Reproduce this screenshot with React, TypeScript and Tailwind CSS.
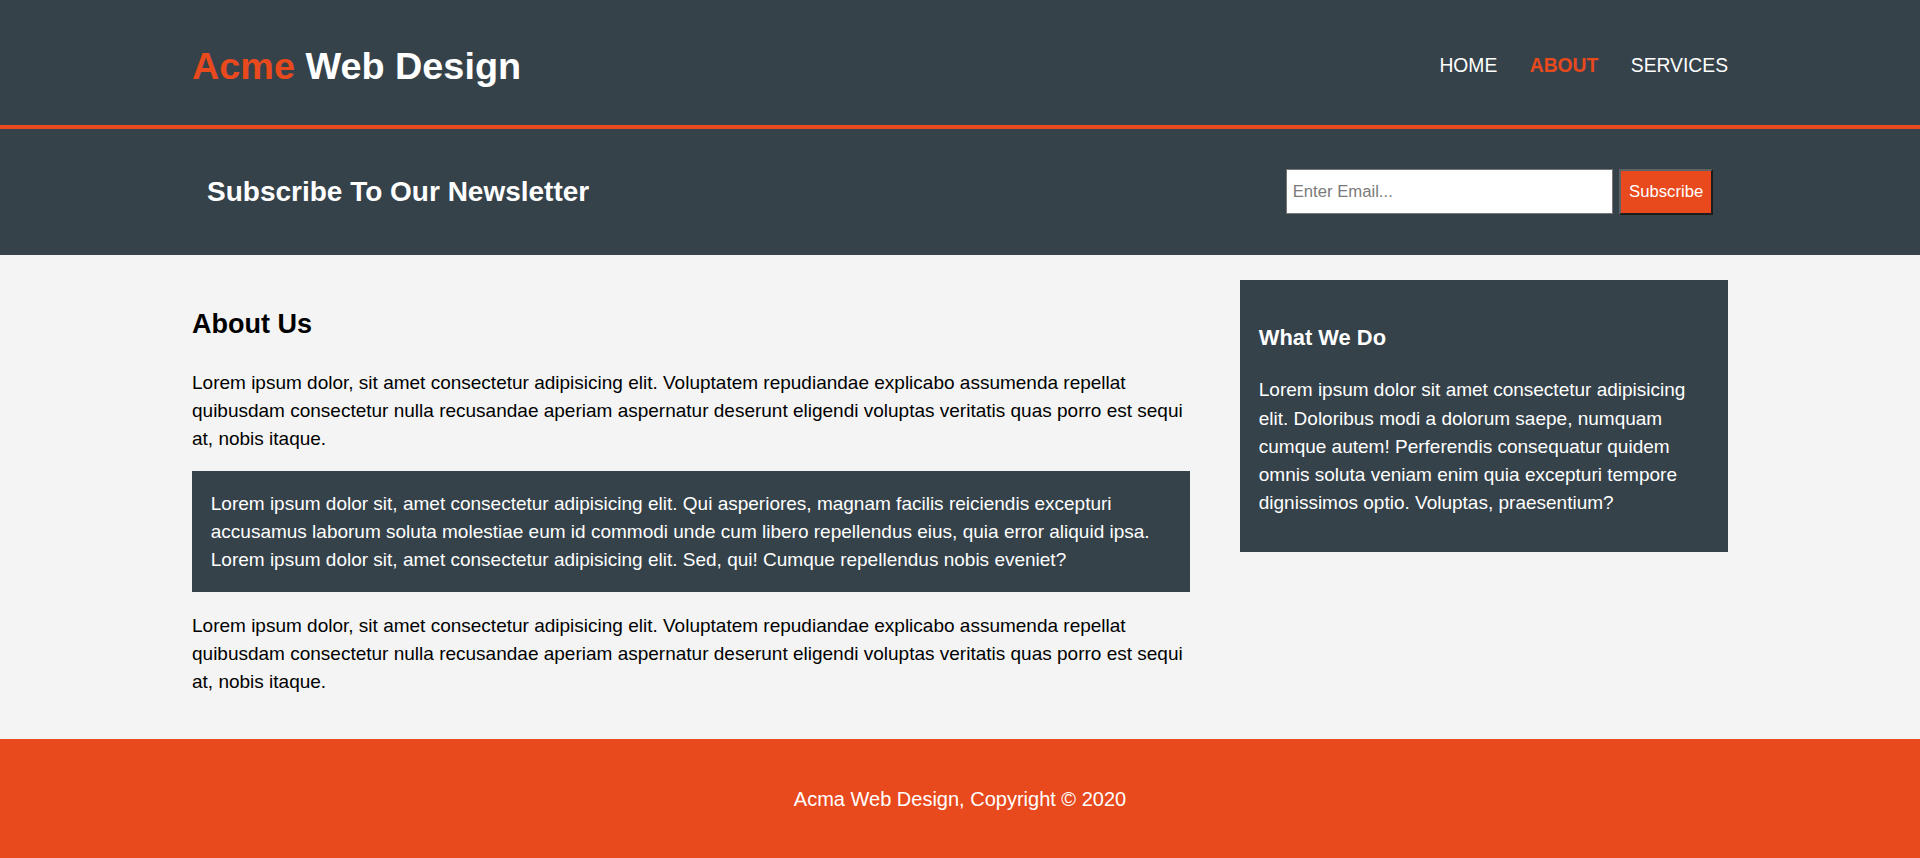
import React from "react";

const FONT = { fontFamily: '"Liberation Sans", Arial, Helvetica, sans-serif' };

function MainPara({ className }: { className: string }) {
  return (
    <p className={className}>
      Lorem ipsum dolor, sit amet consectetur adipisicing elit. Voluptatem repudiandae explicabo assumenda repellat
      <br />
      quibusdam consectetur nulla recusandae aperiam aspernatur deserunt eligendi voluptas veritatis quas porro est sequi
      <br />
      at, nobis itaque.
    </p>
  );
}

export default function App() {
  return (
    <div
      className="min-h-screen bg-[#f4f4f4] text-black font-['Liberation_Sans',Arial,sans-serif]"
      style={FONT}
    >
      {/* Header */}
      <header className="bg-[#35424a] h-[129px] border-b-[4px] border-[#e8491d] text-white">
        <div className="w-[1536px] mx-auto flex justify-between">
          <h1 className="pt-[37.5px] text-[37.8px] leading-[56.25px] font-bold m-0">
            <span className="text-[#e8491d]">Acme</span> Web Design
          </h1>
          <nav className="pt-[54px]">
            <ul className="flex gap-[32.5px] text-[19.3px] leading-[24px] uppercase">
              <li>
                <a href="#" className="text-white">Home</a>
              </li>
              <li>
                <a href="#" className="text-[#e8491d] font-bold">About</a>
              </li>
              <li>
                <a href="#" className="text-white">Services</a>
              </li>
            </ul>
          </nav>
        </div>
      </header>

      {/* Newsletter */}
      <section className="bg-[#35424a] h-[126px] text-white">
        <div className="w-[1506px] mx-auto flex justify-between items-start">
          <h1 className="mt-[41.75px] text-[28px] leading-[42px] font-bold">
            Subscribe To Our Newsletter
          </h1>
          <form className="mt-[40.3px] flex items-start gap-[6.3px]" onSubmit={(e) => e.preventDefault()}>
            <input
              type="email"
              placeholder="Enter Email..."
              className="w-[327.4px] h-[45px] bg-white border border-[#767676] pl-[6px] text-[16.7px] text-black placeholder:text-[#7a7a7a] outline-none"
              style={FONT}
            />
            <button
              type="submit"
              className="w-[93.7px] h-[45.4px] bg-[#e8491d] text-white text-[16.7px] border-2 border-t-[#5e6366] border-l-[#5e6366] border-r-[#1c1c1c] border-b-[#1c1c1c]"
              style={FONT}
            >
              Subscribe
            </button>
          </form>
        </div>
      </section>

      {/* Main */}
      <section>
        <div className="w-[1536px] mx-auto flex justify-between items-start">
          <article className="w-[998px] pt-[48.5px] pb-[25px]">
            <h1 className="text-[27px] leading-[40.5px] font-bold">About Us</h1>
            <MainPara className="mt-[25.2px] text-[19px] leading-[28.125px] whitespace-nowrap" />
            <p className="mt-[17px] bg-[#35424a] text-white px-[18.75px] pt-[19.5px] pb-[18px] text-[19px] leading-[28.125px]">
              Lorem ipsum dolor sit, amet consectetur adipisicing elit. Qui asperiores, magnam facilis reiciendis
              excepturi accusamus laborum soluta molestiae eum id commodi unde cum libero repellendus eius, quia error
              aliquid ipsa. Lorem ipsum dolor sit, amet consectetur adipisicing elit. Sed, qui! Cumque repellendus
              nobis eveniet?
            </p>
            <MainPara className="mt-[19.75px] mb-[17.75px] text-[19px] leading-[28.125px] whitespace-nowrap" />
          </article>
          <aside className="w-[488px] mt-[25px] bg-[#35424a] text-white px-[18.75px] pt-[41.6px] pb-[34.6px]">
            <h3 className="text-[21.9px] leading-[32.9px] font-bold">What We Do</h3>
            <p className="mt-[21.9px] text-[19px] leading-[28.125px]">
              Lorem ipsum dolor sit amet consectetur adipisicing elit. Doloribus modi a dolorum saepe, numquam cumque
              autem! Perferendis consequatur quidem omnis soluta veniam enim quia excepturi tempore dignissimos optio.
              Voluptas, praesentium?
            </p>
          </aside>
        </div>
      </section>

      {/* Footer */}
      <footer className="bg-[#e8491d] h-[119px] flex items-center justify-center text-white">
        <p className="text-[20px] leading-[28.125px] pt-[1px]">Acma Web Design, Copyright &copy; 2020</p>
      </footer>
    </div>
  );
}
